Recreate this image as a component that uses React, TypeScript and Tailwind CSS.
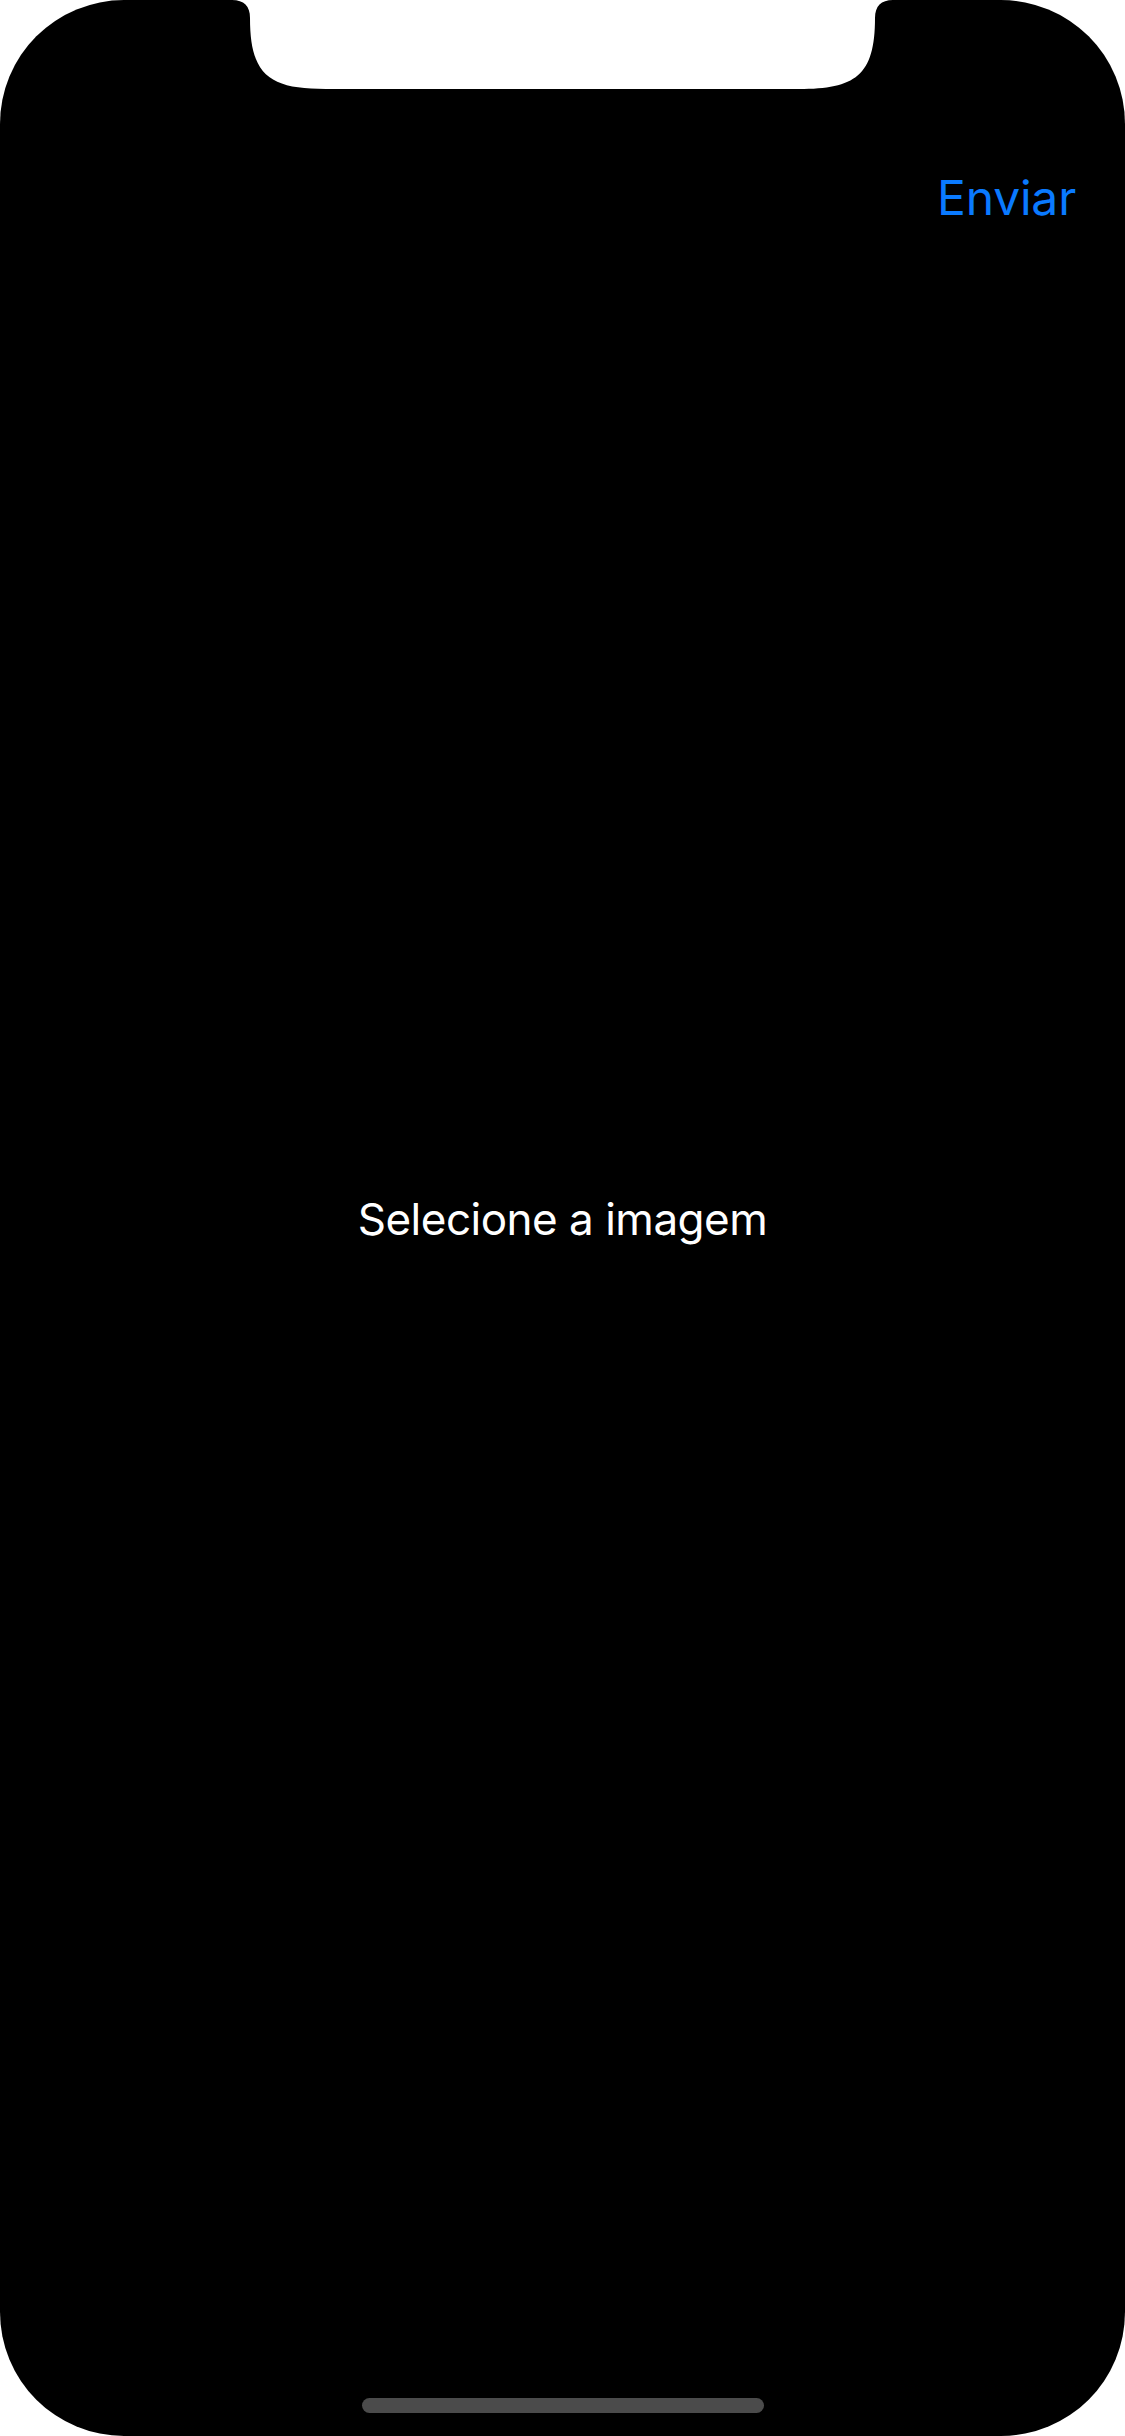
export default function App() {
  return (
    <div className="w-[1125px] h-[2436px] bg-white relative overflow-hidden">
      {/* screen */}
      <div
        className="w-full h-full bg-black rounded-[124px] flex flex-col"
        style={{ fontFamily: "Inter, 'Noto Sans', sans-serif" }}
      >
        {/* nav bar */}
        <div className="h-[264px] flex justify-end items-start pt-[174px] pr-[49px]">
          <button className="text-[48px] leading-none text-[#0a7aff] tracking-[-0.2px]">Enviar</button>
        </div>

        {/* content */}
        <div className="flex-1 flex items-center justify-center">
          <p className="text-[44px] leading-none text-white tracking-[-0.5px]">Selecione a imagem</p>
        </div>

        {/* home indicator */}
        <div className="h-[262px] flex items-end justify-center pb-[23px]">
          <div className="w-[402px] h-[15px] rounded-full bg-[#4b4b4b]" />
        </div>
      </div>

      {/* sensor housing (notch) */}
      <svg className="absolute top-0 left-0" width="1125" height="90" viewBox="0 0 1125 90">
        <path
          d="M 232 0 C 244 0 250 6 250 18 C 250 76 270 89 326 89 L 799 89 C 855 89 875 76 875 18 C 875 6 881 0 893 0 Z"
          fill="#ffffff"
        />
      </svg>
    </div>
  );
}
